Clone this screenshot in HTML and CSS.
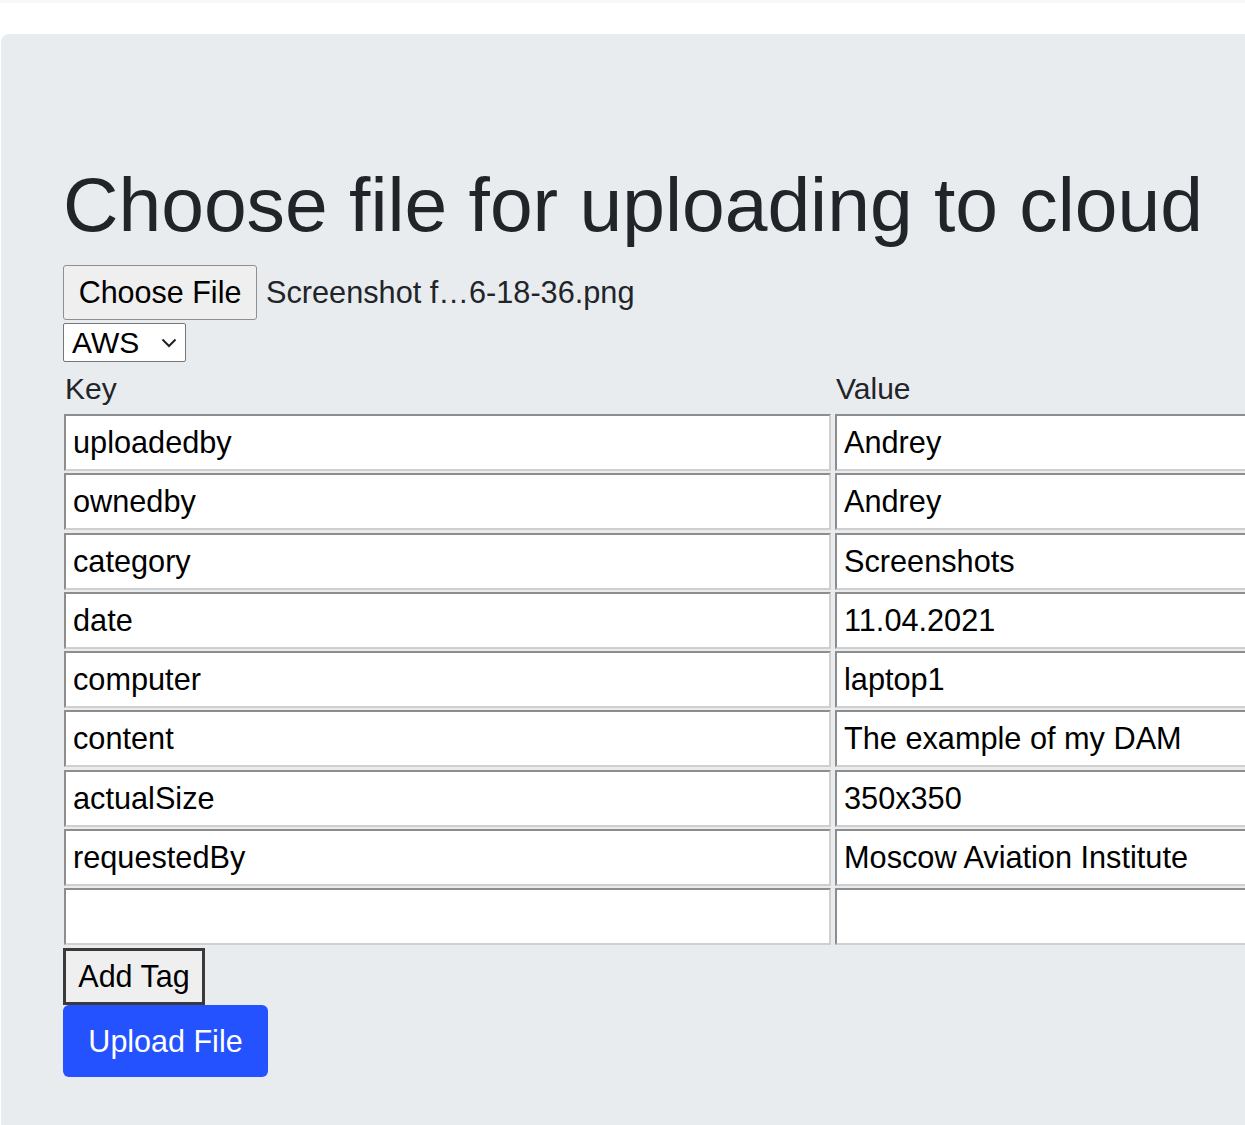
FILE: index.html
```html
<!DOCTYPE html>
<html lang="en">
<head>
<meta charset="utf-8">
<title>Upload to cloud</title>
<link rel="stylesheet" href="styles.css">
</head>
<body>
<div class="topbar"></div>
<div class="jumbotron">
  <h1 class="title">Choose file for uploading to cloud</h1>
  <div class="file-row">
    <span class="file-btn">Choose File</span>
    <span class="file-name">Screenshot f…6-18-36.png</span>
  </div>
  <div class="select">
    <span class="select-text">AWS</span>
    <svg class="chev" width="16" height="10" viewBox="0 0 16 10"><path d="M1.5 1.5 L8 8 L14.5 1.5" fill="none" stroke="#222" stroke-width="2"/></svg>
  </div>
  <div class="labels">
    <span class="label">Key</span>
    <span class="label">Value</span>
  </div>
  <div class="tags">
    <div class="field">uploadedby</div><div class="field">Andrey</div>
    <div class="field">ownedby</div><div class="field">Andrey</div>
    <div class="field">category</div><div class="field">Screenshots</div>
    <div class="field">date</div><div class="field">11.04.2021</div>
    <div class="field">computer</div><div class="field">laptop1</div>
    <div class="field">content</div><div class="field">The example of my DAM</div>
    <div class="field">actualSize</div><div class="field">350x350</div>
    <div class="field">requestedBy</div><div class="field">Moscow Aviation Institute</div>
    <div class="field"></div><div class="field"></div>
  </div>
  <div class="add-tag">Add Tag</div>
  <div class="upload">Upload File</div>
</div>
</body>
</html>
```
FILE: styles.css
```css
html, body {
  margin: 0;
  padding: 0;
  background: #ffffff;
  overflow: hidden;
}
body {
  font-family: "Liberation Sans", Arial, sans-serif;
  color: #212529;
}
.topbar {
  height: 3px;
  background: #f6f7f8;
}
.jumbotron {
  margin: 31px 0 0 1px;
  background: #e9ecef;
  border-radius: 8px 0 0 0;
  padding: 124px 0 60px 62px;
  overflow: hidden;
  display: flex;
  flex-direction: column;
  align-items: flex-start;
}
.title {
  margin: 0 0 15px 0;
  font-size: 76.8px;
  line-height: 92px;
  font-weight: 400;
  white-space: nowrap;
  color: #212529;
}
.file-row {
  display: flex;
  align-items: center;
  height: 55px;
}
.file-btn {
  box-sizing: border-box;
  height: 55px;
  width: 194px;
  display: flex;
  align-items: center;
  justify-content: center;
  font-size: 30.5px;
  color: #000;
  background: #efefef;
  border: 1px solid #8f8f8f;
  border-radius: 3px;
}
.file-name {
  margin-left: 9px;
  font-size: 30.7px;
  color: #212529;
}
.select {
  box-sizing: border-box;
  margin-top: 3px;
  width: 123px;
  height: 39px;
  display: flex;
  align-items: center;
  justify-content: space-between;
  padding: 0 8px 0 8px;
  background: #fff;
  border: 1px solid #767676;
  border-radius: 2px;
  font-size: 30px;
  color: #000;
}
.chev {
  display: block;
}
.labels {
  margin-top: 9px;
  margin-bottom: 7px;
  display: grid;
  grid-template-columns: 771px 400px;
  font-size: 30px;
  line-height: 36px;
  padding-left: 2px;
}
.tags {
  display: grid;
  grid-template-columns: 767px 767px;
  column-gap: 4px;
  row-gap: 2.3px;
  margin-left: 1px;
}
.field {
  box-sizing: border-box;
  height: 57px;
  background: #fff;
  border-style: solid;
  border-width: 2px;
  border-color: #8d8d8d #cfcfcf #cfcfcf #8d8d8d;
  font-size: 30.7px;
  line-height: 53px;
  padding-left: 7px;
  color: #000;
  white-space: nowrap;
}
.add-tag {
  box-sizing: border-box;
  margin-top: 3px;
  width: 142px;
  height: 57px;
  display: flex;
  align-items: center;
  justify-content: center;
  background: #efefef;
  border: 3px solid #3a3a3a;
  font-size: 30.5px;
  color: #000;
}
.upload {
  box-sizing: border-box;
  width: 205px;
  height: 72px;
  display: flex;
  align-items: center;
  justify-content: center;
  background: #2452ff;
  border-radius: 6px;
  color: #fff;
  font-size: 30.5px;
}
```
